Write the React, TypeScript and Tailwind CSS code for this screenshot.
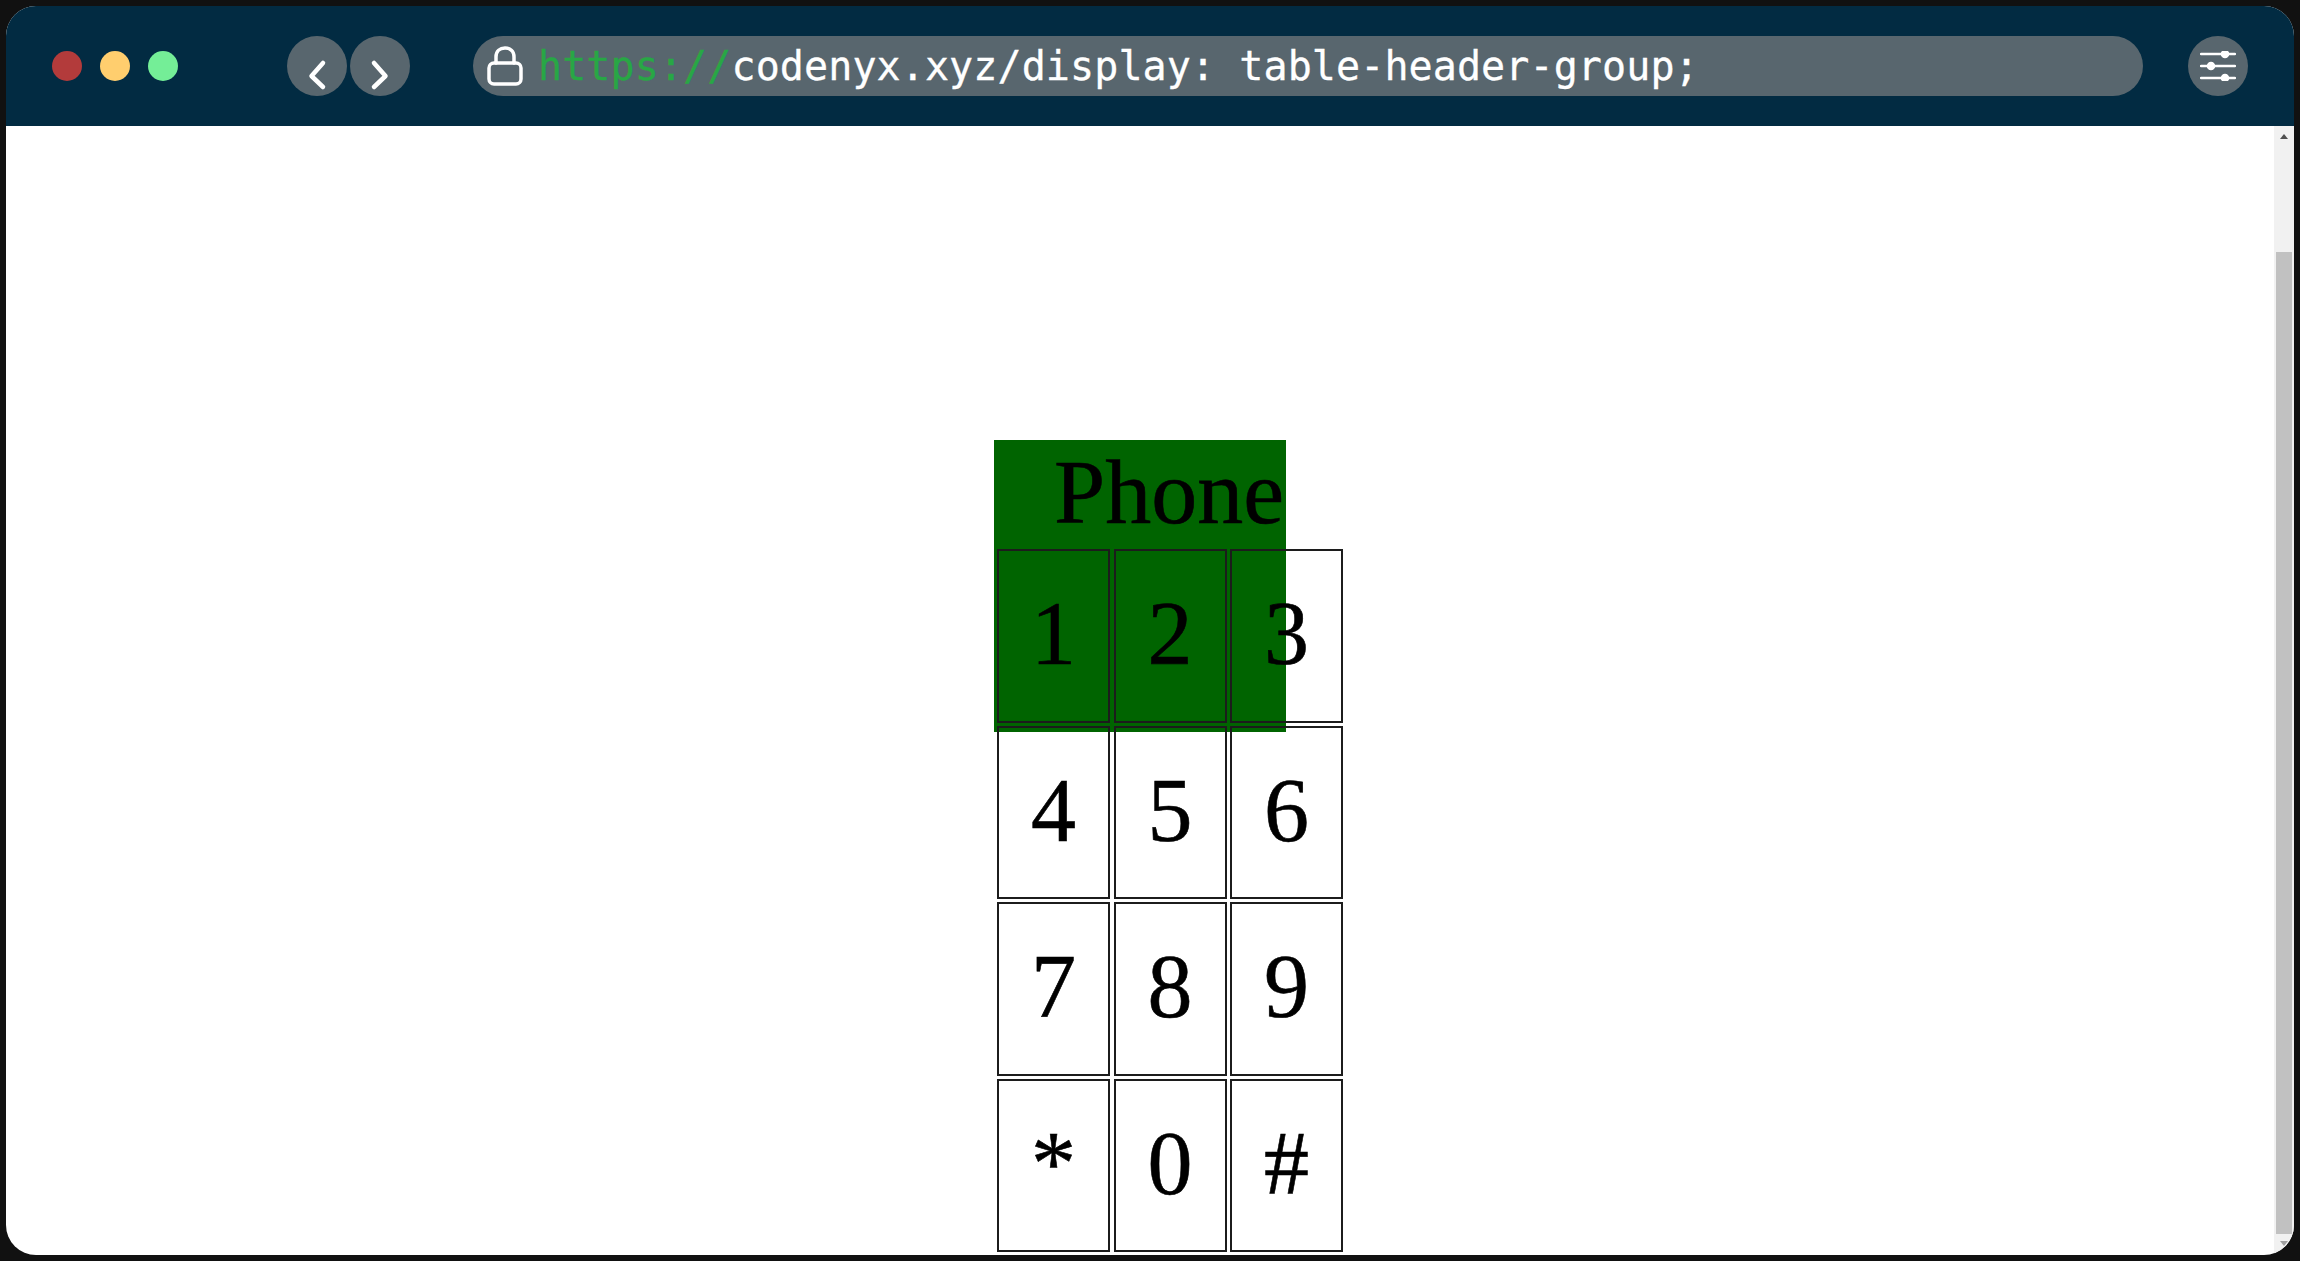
import React from "react";

const keys = ["1", "2", "3", "4", "5", "6", "7", "8", "9", "*", "0", "#"];

function CircleButton({ children }: { children: React.ReactNode }) {
  return (
    <div className="flex h-[60px] w-[60px] shrink-0 items-center justify-center rounded-full bg-[#58666e]">
      {children}
    </div>
  );
}

export default function App() {
  return (
    <div className="h-[1261px] w-[2300px] overflow-hidden bg-[#111111] pt-[6px] pr-[6px] pb-[6px] pl-[6px]">
      <div className="flex h-full flex-col overflow-hidden rounded-[30px] bg-white">
        <header className="flex h-[120px] shrink-0 items-center bg-[#022b42] pl-[46px] pr-[46px]">
          <div className="flex gap-[18px]">
            <span className="h-[30px] w-[30px] rounded-full bg-[#b33b3b]" />
            <span className="h-[30px] w-[30px] rounded-full bg-[#ffce6e]" />
            <span className="h-[30px] w-[30px] rounded-full bg-[#74ee97]" />
          </div>
          <div className="ml-[109px] flex gap-[3px]">
            <CircleButton>
              <svg width="60" height="60" viewBox="0 0 60 60" fill="none" stroke="white" strokeWidth="4.5" strokeLinecap="round" strokeLinejoin="round">
                <path d="M36 27 L24.5 40 L36 51" />
              </svg>
            </CircleButton>
            <CircleButton>
              <svg width="60" height="60" viewBox="0 0 60 60" fill="none" stroke="white" strokeWidth="4.5" strokeLinecap="round" strokeLinejoin="round">
                <path d="M24 27 L35.5 40 L24 51" />
              </svg>
            </CircleButton>
          </div>
          <div className="ml-[63px] flex h-[60px] w-[1670px] shrink-0 items-center rounded-full bg-[#58666e] pl-[14px]">
            <svg width="36" height="40" viewBox="0 0 36 40" fill="none" stroke="white" strokeWidth="3.5" strokeLinecap="round" strokeLinejoin="round" className="shrink-0">
              <rect x="2" y="17" width="32" height="21" rx="5" />
              <path d="M9 17 V11 C9 5 13 2 18 2 C23 2 27 5 27 11 V17" />
            </svg>
            <div className="ml-[15px] whitespace-nowrap font-['DejaVu_Sans_Mono',monospace] text-[40px] leading-[60px] tracking-[0.1px] text-white [-webkit-text-stroke:0.3px_currentColor]">
              <span className="text-[#28a745]">https://</span>codenyx.xyz/display: table-header-group;
            </div>
          </div>
          <div className="ml-[45px]">
            <CircleButton>
              <svg width="36" height="30" viewBox="0 0 36 30" fill="white" stroke="white" strokeWidth="2.5" strokeLinecap="round">
                <path d="M1 3 H35 M1 15 H35 M1 27 H35" />
                <circle cx="25" cy="3" r="3" />
                <circle cx="11" cy="15" r="3" />
                <circle cx="25" cy="27" r="3" />
              </svg>
            </CircleButton>
          </div>
        </header>

        <div className="flex min-h-0 flex-1">
          <main className="flex min-w-0 flex-1 justify-center overflow-hidden pt-[314px] font-['Liberation_Serif',serif] text-black [-webkit-text-stroke:0.6px_black]">
            <div className="h-[292px] w-[292px] shrink-0 bg-[#006400] pl-[3px]">
              <div className="h-[109px] pr-[2px] text-right text-[92px] leading-[104px]">Phone</div>
              <div className="grid w-[346px] grid-cols-[repeat(3,113px)] auto-rows-[173.5px] gap-x-[3.5px] gap-y-[3px]">
                {keys.map((k) => (
                  <div key={k} className="flex items-center justify-center border-2 border-[#1c1c1c] pb-[3px] text-[90px] leading-none">
                    {k}
                  </div>
                ))}
              </div>
            </div>
          </main>

          <aside className="flex w-[20px] shrink-0 flex-col items-center bg-[#f1f1f1]">
            <div className="mt-[8px] h-0 w-0 border-x-[4px] border-b-[5px] border-x-transparent border-b-[#505050]" />
            <div className="mt-[113px] h-[982px] w-[16px] bg-[#c1c1c1]" />
            <div className="mt-[7px] h-0 w-0 border-x-[4px] border-t-[5px] border-x-transparent border-t-[#a0a0a0]" />
          </aside>
        </div>
      </div>
    </div>
  );
}
